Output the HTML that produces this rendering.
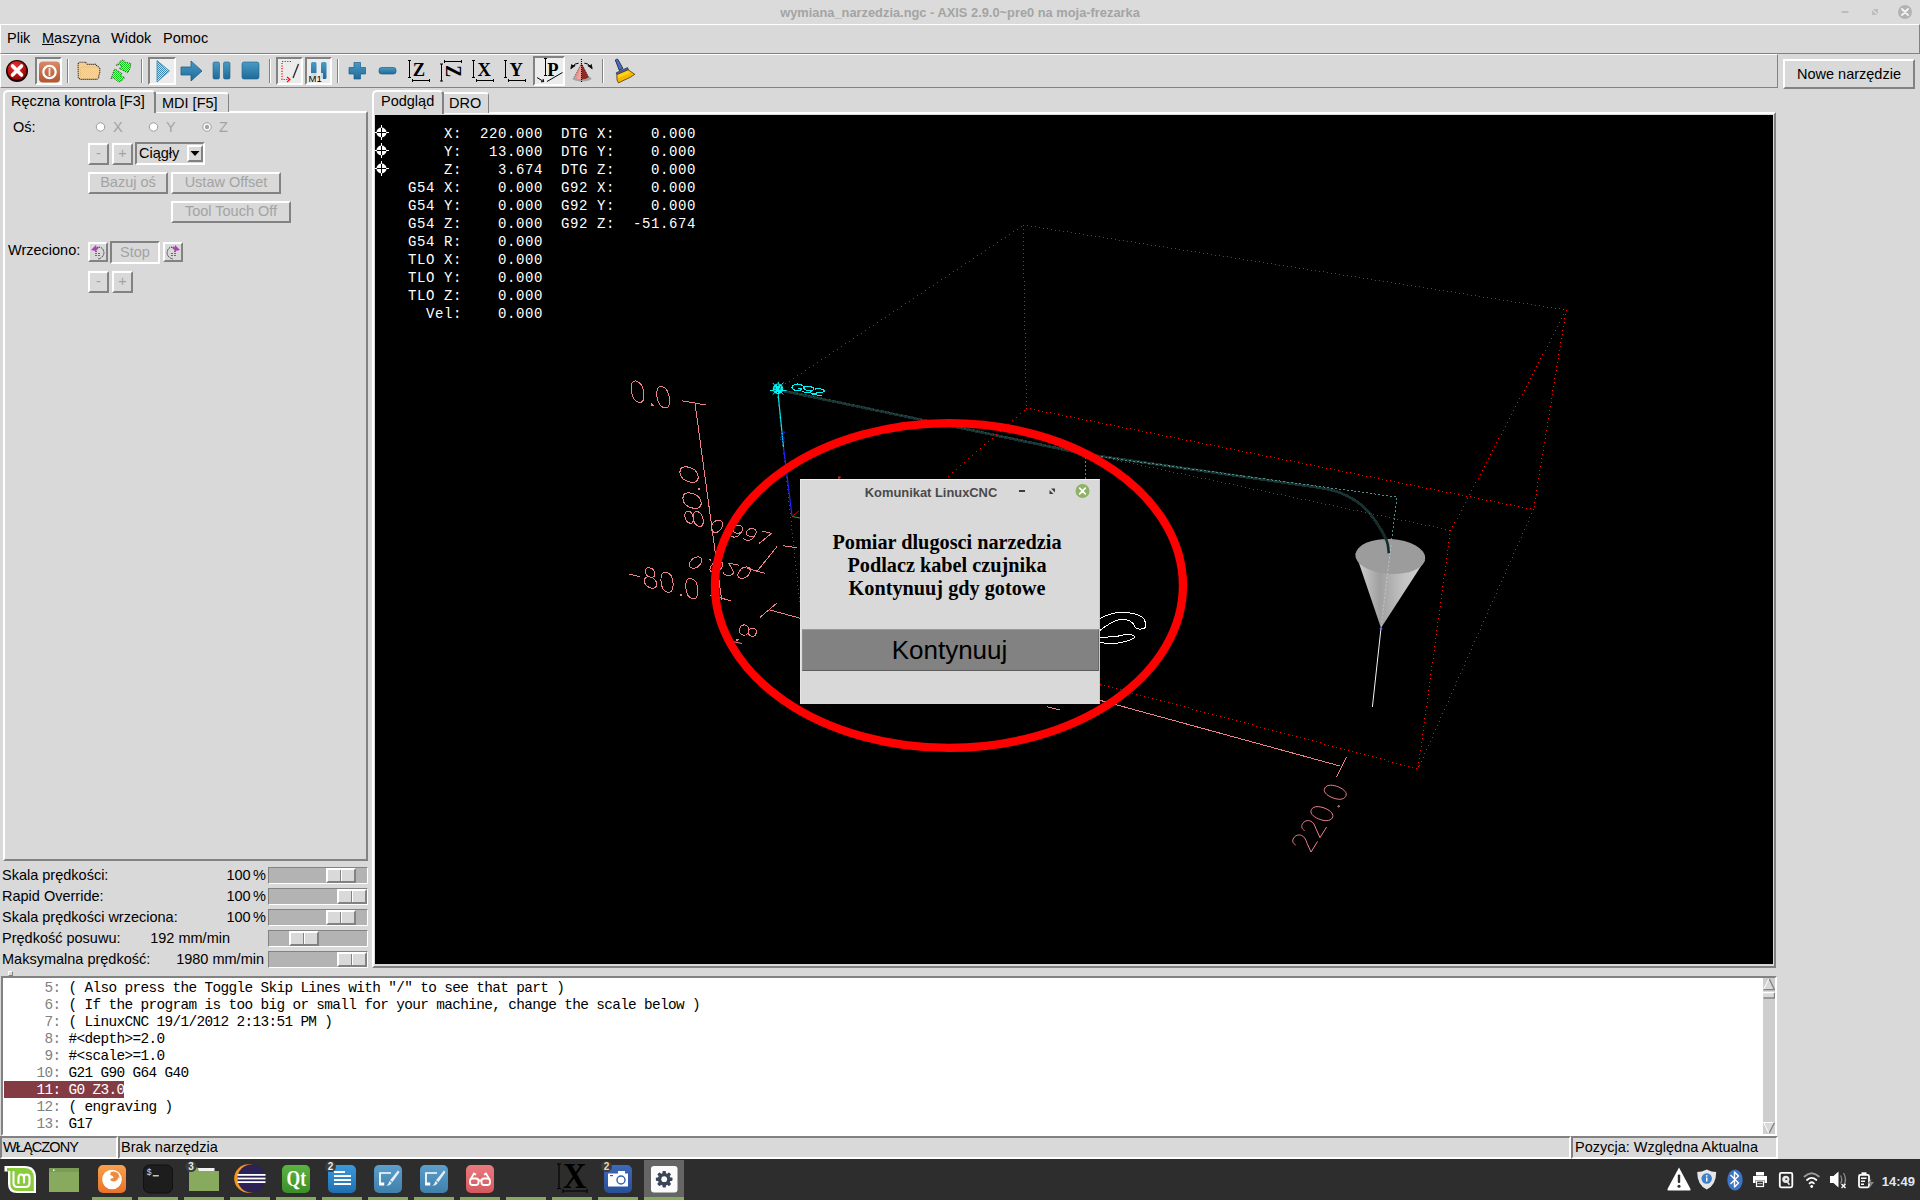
<!DOCTYPE html>
<html lang="pl">
<head>
<meta charset="utf-8">
<title>wymiana_narzedzia.ngc - AXIS 2.9.0~pre0 na moja-frezarka</title>
<style>
*{box-sizing:border-box;margin:0;padding:0}
html,body{width:1920px;height:1200px;overflow:hidden;background:#d9d9d9}
body{position:relative;font-family:"Liberation Sans",sans-serif;font-size:14.5px;color:#000}
.abs{position:absolute}
.t{position:absolute;white-space:pre;line-height:18px;height:18px}
.raised{position:absolute;border:2px solid;border-color:#fff #828282 #828282 #fff;background:#d9d9d9}
.sunken{position:absolute;border:2px solid;border-color:#828282 #fff #fff #828282;background:#d9d9d9}
.btn{position:absolute;border:2px solid;border-color:#fff #828282 #828282 #fff;background:#d9d9d9;color:#a3a3a3;text-align:center;white-space:pre}
.dis{color:#a3a3a3}
.mono{font-family:"Liberation Mono",monospace}
.serif{font-family:"Liberation Serif",serif}
/* title bar */
#titlebar{left:0;top:0;width:1920px;height:24px;background:#dbdbdb}
#titletext{left:0;top:5px;width:1920px;text-align:center;font-size:12.85px;font-weight:bold;color:#a4a4a4;line-height:16px}
/* menubar */
#menubar{left:0;top:24px;width:1920px;height:30px;border:1px solid;border-color:#fff #828282 #828282 #fff;background:#d9d9d9}
/* toolbar */
#toolbar{left:0;top:54px;width:1778px;height:34px;border:1px solid;border-color:#fff #828282 #828282 #fff;background:#d9d9d9}
.tsep{position:absolute;top:59px;width:2px;height:24px;border-left:1px solid #828282;border-right:1px solid #fff}
.tsunk{position:absolute;border:2px solid;border-color:#828282 #fff #fff #828282;background:#ececec}
/* tabs */
.tab{position:absolute;border:2px solid;border-color:#fff #828282 transparent #fff;border-radius:5px 5px 0 0;background:#d9d9d9}
/* g-code */
#gcode{left:1px;top:976px;width:1776px;height:160px;border:2px solid;border-color:#828282 #fff #fff #828282;background:#fff;overflow:hidden}
.gl{position:absolute;height:17px;line-height:17px;font-family:"Liberation Mono",monospace;font-size:14.4px;letter-spacing:-0.642px;white-space:pre;color:#000}
.gl i{font-style:normal;color:#808080}
/* taskbar */
#taskbar{left:0;top:1159px;width:1920px;height:41px;background:#2d2d2d}
.ind{position:absolute;top:38px;height:3px;width:40px;background:#87aa5f}
</style>
</head>
<body>
<div id="titlebar" class="abs"></div>
<div id="titletext" class="abs">wymiana_narzedzia.ngc - AXIS 2.9.0~pre0 na moja-frezarka</div>
<svg class="abs" style="left:1830px;top:0" width="90" height="24" viewBox="0 0 90 24">
<rect x="11.500" y="11" width="7" height="2" fill="#bdbdbd"/>
<path d="M43 9 h5 v5 z M42 15 v-5 l5 5 z" fill="#bdbdbd"/>
<circle cx="75" cy="12" r="7" fill="#b3b3b3"/>
<path d="M72 9 l6 6 M78 9 l-6 6" stroke="#f4f4f4" stroke-width="1.8" stroke-linecap="round"/>
</svg>

<div id="menubar" class="abs"></div>
<div class="t" style="left:7px;top:29px">Plik</div>
<div class="t" style="left:42px;top:29px"><u>M</u>aszyna</div>
<div class="t" style="left:111px;top:29px">Widok</div>
<div class="t" style="left:163px;top:29px">Pomoc</div>
<div class="raised" style="left:1783px;top:59px;width:132px;height:30px"></div>
<div class="t" style="left:1783px;top:65px;width:132px;text-align:center">Nowe narzędzie</div>

<div id="toolbar" class="abs"></div>
<div class="tsunk" style="left:35px;top:57px;width:27px;height:28px"></div>
<div class="tsunk" style="left:148px;top:57px;width:28px;height:28px"></div>
<div class="tsunk" style="left:276px;top:57px;width:27px;height:28px"></div>
<div class="tsunk" style="left:305px;top:57px;width:27px;height:28px"></div>
<div class="tsunk" style="left:533px;top:56px;width:32px;height:30px"></div>
<div class="tsep" style="left:67px"></div><div class="tsep" style="left:141px"></div><div class="tsep" style="left:269px"></div><div class="tsep" style="left:337px"></div><div class="tsep" style="left:602px"></div>
<svg class="abs" style="left:0;top:54px" width="700" height="34" viewBox="0 54 700 34">
<defs>
<linearGradient id="gb" x1="0" y1="0" x2="0" y2="1"><stop offset="0" stop-color="#4a9ac6"/><stop offset="1" stop-color="#1f6a98"/></linearGradient>
<radialGradient id="gr" cx="0.4" cy="0.3" r="0.8"><stop offset="0" stop-color="#f03030"/><stop offset="1" stop-color="#8a0000"/></radialGradient>
<linearGradient id="go" x1="0" y1="0" x2="0" y2="1"><stop offset="0" stop-color="#d98a68"/><stop offset="1" stop-color="#b5532c"/></linearGradient>
<pattern id="dots" width="2" height="2" patternUnits="userSpaceOnUse"><rect width="2" height="2" fill="#d9d9d9"/><rect width="1" height="1" fill="#3c86b3"/><rect x="1" y="1" width="1" height="1" fill="#3c86b3"/></pattern>
<pattern id="dotf" width="2" height="2" patternUnits="userSpaceOnUse"><rect width="2" height="2" fill="#d9d9d9"/><rect width="1" height="1" fill="#f0c888"/><rect x="1" y="1" width="1" height="1" fill="#f0c888"/></pattern>
<pattern id="dotg" width="2" height="2" patternUnits="userSpaceOnUse"><rect width="2" height="2" fill="#d9d9d9"/><rect width="1" height="1" fill="#08cc10"/><rect x="1" y="1" width="1" height="1" fill="#18d820"/></pattern>
</defs>
<!-- estop -->
<circle cx="17" cy="71" r="11" fill="#1a0000"/><circle cx="17" cy="70.5" r="9.6" fill="url(#gr)"/>
<path d="M12.5 66 l9 9 M21.5 66 l-9 9" stroke="#fff" stroke-width="3.6" stroke-linecap="round"/>
<!-- power -->
<rect x="39" y="61.5" width="21" height="21" rx="4" fill="url(#go)"/>
<circle cx="49.5" cy="72" r="6.2" fill="none" stroke="#fff" stroke-width="2.2"/><rect x="48.6" y="68" width="1.8" height="8" fill="#f6e4dc"/>
<!-- folder -->
<path d="M78.100,63.600 L79.400,62.300 H85.600 L87.500,64.400 H95.600 L99.800,68.400 V72.750 L98.750,75.700 V77.750 L96.700,79.400 H80.200 L78.300,77.750 Z" fill="url(#dotf)" stroke="#111" stroke-width="1.100" stroke-dasharray="1 1"/>
<path d="M80.500,77 V68.500 L82,67 H96" fill="none" stroke="#e0b070" stroke-width="0.800" stroke-dasharray="1 1"/>
<!-- reload -->
<path d="M116,65.500 L121.500,60.250 H123.750 L125.400,62.300 L130.800,63.400 L130,68.600 L127.700,72.750 L119.200,68.400 L121.700,66.300 L119.600,64.400 Z" fill="url(#dotg)" stroke="#1c3c1c" stroke-width="0.900" stroke-dasharray="1 1"/>
<path d="M111,78.600 L114.400,69.200 L116.250,69.800 L121.900,73.600 L120.600,75.700 L124.800,77.750 L120.400,81.700 H118.300 L113.300,77.750 Z" fill="url(#dotg)" stroke="#1c3c1c" stroke-width="0.900" stroke-dasharray="1 1"/>
<!-- play -->
<path d="M157 60.5 L169.5 71 L157 82 z" fill="url(#dots)" stroke="#3c86b3" stroke-width="0.8"/>
<!-- step -->
<path d="M181 67 h10 v-6 l11 10 l-11 10 v-6 h-10 z" fill="url(#gb)" stroke="#1b5f8a" stroke-width="0.8"/>
<!-- pause -->
<rect x="213" y="62" width="6.5" height="17" rx="1.5" fill="url(#gb)" stroke="#1b5f8a" stroke-width="0.6"/><rect x="223.5" y="62" width="6.5" height="17" rx="1.5" fill="url(#gb)" stroke="#1b5f8a" stroke-width="0.6"/>
<!-- stop -->
<rect x="242" y="62" width="17" height="17" rx="2" fill="url(#gb)" stroke="#1b5f8a" stroke-width="0.6"/>
<!-- skip -->
<path d="M291 61.5 h-9 v18 h7" fill="none" stroke="#f00" stroke-width="1.2" stroke-dasharray="1.2 1.4"/><path d="M287 77 l3 2.5 l-3 2.5" fill="none" stroke="#f00" stroke-width="1.1"/>
<path d="M298.5 64 l-5.5 14" stroke="#333" stroke-width="1.4"/>
<!-- M1 -->
<rect x="311" y="62" width="5.5" height="17" rx="1.5" fill="url(#gb)"/><rect x="321" y="62" width="5.5" height="17" rx="1.5" fill="url(#gb)"/>
<rect x="308" y="73" width="15" height="9" fill="#ececec" opacity="0.85"/>
<text x="308.5" y="82" font-family="Liberation Sans" font-size="9.5" fill="#000">M1</text>
<!-- plus / minus -->
<path d="M354 62.5 h6.5 v5 h5 v6.5 h-5 v5 h-6.5 v-5 h-5 v-6.5 h5 z" fill="url(#gb)" stroke="#1b5f8a" stroke-width="0.7" stroke-linejoin="round"/>
<rect x="379" y="67.5" width="17" height="6.5" rx="2.5" fill="url(#gb)" stroke="#1b5f8a" stroke-width="0.7"/>
<!-- view Z -->
<g fill="none" stroke="#000" stroke-width="1">
<path d="M409.500,60.500 v17 M408,60.500 h3 M408,77.500 h3 M412,80.500 h18 M412.500,79 v3 M429.500,79 v3"/>
<path d="M441.500,64 v17 M440,64 h3 M440,81 h3 M444,61.500 h18 M444.500,60 v3 M461.500,60 v3"/>
<path d="M473.500,60.500 v17 M472,60.500 h3 M472,77.500 h3 M476,80.500 h18 M476.500,79 v3 M493.500,79 v3"/>
<path d="M505.500,60.500 v17 M504,60.500 h3 M504,77.500 h3 M508,80.500 h18 M508.500,79 v3 M525.500,79 v3"/>
<path d="M545.500,58.500 v17 M544,58.500 h3 M544,75.500 h3 M547,81.500 l15.500,-9 M537,77.500 l6.500,4 M541,81.800 l2.700,-0.200 l-0.600,-2.600"/>
</g>
<g font-family="Liberation Serif" font-weight="bold" font-size="18.500" fill="#000">
<text x="412.800" y="75.700">Z</text>
<text transform="translate(445.500,65.300) rotate(90) scale(0.960,1.200)">Z</text>
<text x="477.500" y="75.700">X</text>
<text x="509.500" y="75.700">Y</text>
<text x="547.300" y="75.700" font-size="18.500">P</text>
</g>
<!-- cone rotate -->
<ellipse cx="582" cy="78.500" rx="9.500" ry="3" fill="#444" opacity="0.35"/>
<path d="M581.500,63.300 L574.300,77.300 Q577,79.600 581.500,79.600 z" fill="#ee948c"/><path d="M581.500,63.300 L577.500,78.800 Q579,79.600 581.500,79.600 z" fill="#f4b0a8" opacity="0.6"/>
<path d="M581.500,63.300 L588.700,77.300 Q586,79.600 581.500,79.600 z" fill="#8e2c24"/>
<path d="M581.500,63.300 L574.300,77.300 M581.500,63.300 L588.700,77.300" stroke="#2a1010" stroke-width="0.700" stroke-dasharray="1 1" fill="none"/>
<path d="M581.500,59 v24" stroke="#000" stroke-width="1.100" stroke-dasharray="1 1"/>
<path d="M572.500,66.500 Q575,63.200 578.600,63.200 M590.500,66.500 Q588,63.200 584.400,63.200" fill="none" stroke="#000" stroke-width="1"/>
<path d="M570.800,68.800 l0.900,-4.300 l1.300,1.500 l2.200,-0.400 z M592.200,68.800 l-0.900,-4.300 l-1.300,1.500 l-2.200,-0.400 z" fill="#000" stroke="#000" stroke-width="0.800" stroke-linejoin="round"/>
<!-- broom -->
<path d="M615.300,60 q1.200,-1.300 2.600,-0.600 l5,9 l-3.600,2 z" fill="#4a6ec2" stroke="#101830" stroke-width="0.800"/>
<path d="M616.200,72.800 l11.300,-5.200 l1,2.200 l-11.500,5 z" fill="#4468b8" stroke="#101830" stroke-width="0.600"/>
<path d="M616.800,74.600 l11.300,-4.900 l6.700,4.600 l-4.600,3 l-11.800,5.600 l-1.400,-3 z" fill="#f4b800" stroke="#3a2800" stroke-width="0.700" stroke-linejoin="round"/>
<path d="M617.500,75.200 l10.300,-4.500 l3,2.200 l-12.500,5 z" fill="#ffd820" opacity="0.8"/>
</svg>

<!-- left notebook -->
<div class="raised" style="left:3px;top:111px;width:365px;height:750px"></div>
<div class="tab" style="left:156px;top:92px;width:73px;height:20px;border-width:2px 1px 0 0;border-radius:0 4px 0 0"></div>
<div class="tab" style="left:3px;top:90px;width:153px;height:23px;border-bottom:0"></div>
<div class="abs" style="left:154px;top:92px;width:2px;height:20px;background:#828282"></div>
<div class="t" style="left:11px;top:92px">Ręczna kontrola [F3]</div>
<div class="t" style="left:162px;top:94px">MDI [F5]</div>
<!-- right notebook -->
<div class="raised" style="left:372px;top:112px;width:1404px;height:856px"></div>
<div class="tab" style="left:444px;top:92px;width:45px;height:21px;border-width:2px 1px 0 0;border-radius:0 4px 0 0"></div>
<div class="tab" style="left:372px;top:90px;width:72px;height:24px;border-bottom:0"></div>
<div class="abs" style="left:442px;top:92px;width:2px;height:21px;background:#828282"></div>
<div class="t" style="left:381px;top:92px">Podgląd</div>
<div class="t" style="left:449px;top:94px">DRO</div>
<!-- jog controls -->
<div class="t" style="left:13px;top:118px">Oś:</div>
<svg class="abs" style="left:90px;top:118px" width="150" height="18" viewBox="90 118 150 18">
<g fill="#fff" stroke="#9c9c9c" stroke-width="1"><circle cx="100.500" cy="127" r="4.200"/><circle cx="153.500" cy="127" r="4.200"/><circle cx="207" cy="127" r="4.200"/></g>
<circle cx="207" cy="127" r="2.200" fill="#a3a3a3"/>
</svg>
<div class="t dis" style="left:113px;top:118px">X</div>
<div class="t dis" style="left:166px;top:118px">Y</div>
<div class="t dis" style="left:219px;top:118px">Z</div>
<div class="btn" style="left:88px;top:143px;width:21px;height:22px;line-height:17px">-</div>
<div class="btn" style="left:112px;top:143px;width:21px;height:22px;line-height:17px">+</div>
<div class="sunken" style="left:135px;top:142px;width:70px;height:23px"></div>
<div class="t" style="left:139px;top:144px">Ciągły</div>
<div class="raised" style="left:187px;top:145px;width:16px;height:17px"></div>
<svg class="abs" style="left:190px;top:150px" width="10" height="7"><path d="M0.500 1 h9 l-4.500 5 z" fill="#000"/></svg>
<div class="btn" style="left:88px;top:172px;width:80px;height:22px;line-height:17px">Bazuj oś</div>
<div class="btn" style="left:171px;top:172px;width:110px;height:22px;line-height:17px">Ustaw Offset</div>
<div class="btn" style="left:171px;top:201px;width:120px;height:22px;line-height:17px">Tool Touch Off</div>
<div class="t" style="left:8px;top:241px">Wrzeciono:</div>
<div class="btn" style="left:88px;top:242px;width:20px;height:20px"></div>
<div class="sunken" style="left:110px;top:241px;width:50px;height:23px"></div>
<div class="t dis" style="left:110px;top:243px;width:50px;text-align:center">Stop</div>
<div class="btn" style="left:163px;top:242px;width:20px;height:20px"></div>
<svg class="abs" style="left:88px;top:242px" width="96" height="20" viewBox="88 242 96 20">
<g fill="none" stroke="#000" stroke-width="1" stroke-dasharray="1 1"><path d="M95 248 q8 -3 9 5 q-1 5 -6 6"/><path d="M176 248 q-8 -3 -9 5 q1 5 6 6"/></g>
<path d="M91 250 l5 -5 l0.500 2.500 l3 -0.500 l-3.500 4 z" fill="#b040b0"/><path d="M180 250 l-5 -5 l-0.500 2.500 l-3 -0.500 l3.500 4 z" fill="#b040b0"/>
<path d="M96 251 v5 M99 253 v4 M175 251 v5 M172 253 v4" stroke="#000" stroke-width="1" stroke-dasharray="1 1"/>
</svg>
<div class="btn" style="left:88px;top:271px;width:21px;height:22px;line-height:17px">-</div>
<div class="btn" style="left:112px;top:271px;width:21px;height:22px;line-height:17px">+</div>

<!--PREVIEW-START-->
<svg class="abs" style="left:375px;top:115px" width="1398" height="849" viewBox="375 115 1398 849">
<rect x="375" y="115" width="1399" height="850" fill="#000"/>
<g font-family="Liberation Mono" font-size="14" letter-spacing="0.6" fill="#fff" style="white-space:pre"><text x="408" y="138" xml:space="preserve">    X:  220.000  DTG X:    0.000</text><text x="408" y="156" xml:space="preserve">    Y:   13.000  DTG Y:    0.000</text><text x="408" y="174" xml:space="preserve">    Z:    3.674  DTG Z:    0.000</text><text x="408" y="192" xml:space="preserve">G54 X:    0.000  G92 X:    0.000</text><text x="408" y="210" xml:space="preserve">G54 Y:    0.000  G92 Y:    0.000</text><text x="408" y="228" xml:space="preserve">G54 Z:    0.000  G92 Z:  -51.674</text><text x="408" y="246" xml:space="preserve">G54 R:    0.000</text><text x="408" y="264" xml:space="preserve">TLO X:    0.000</text><text x="408" y="282" xml:space="preserve">TLO Y:    0.000</text><text x="408" y="300" xml:space="preserve">TLO Z:    0.000</text><text x="408" y="318" xml:space="preserve">  Vel:    0.000</text></g>
<g transform="translate(381.5,132.5)"><circle r="5" fill="#fff"/><path d="M-5,0 h10 M0,-5 v10" stroke="#000" stroke-width="1"/><path d="M-7.500,0 h3 M4.500,0 h3 M0,-7.500 v3 M0,4.500 v3" stroke="#fff" stroke-width="1"/></g><g transform="translate(381.5,150.5)"><circle r="5" fill="#fff"/><path d="M-5,0 h10 M0,-5 v10" stroke="#000" stroke-width="1"/><path d="M-7.500,0 h3 M4.500,0 h3 M0,-7.500 v3 M0,4.500 v3" stroke="#fff" stroke-width="1"/></g><g transform="translate(381.5,168.5)"><circle r="5" fill="#fff"/><path d="M-5,0 h10 M0,-5 v10" stroke="#000" stroke-width="1"/><path d="M-7.500,0 h3 M4.500,0 h3 M0,-7.500 v3 M0,4.500 v3" stroke="#fff" stroke-width="1"/></g>
<path shape-rendering="crispEdges" d="M681.7,400.7 L706,405 M695,403.3 L721.7,600 M710,595 L730.7,600.7 M783,545.7 L797,547.7 M746.7,568.3 L765,573.3 M777,546.5 L756.5,572 M760,617.3 L776.7,603.3 M770,610 L1340,766 M1346.7,756.7 L1336.7,776.7 M1047,706.7 L1060,710" fill="none" stroke="#f08088" stroke-width="1"/>
<g fill="none" shape-rendering="crispEdges" stroke="#f08088" stroke-width="1.00"><path vector-effect="non-scaling-stroke" d="M0.3,-1 C0.1,-1 0,-0.78 0,-0.5 C0,-0.22 0.1,0 0.3,0 C0.5,0 0.6,-0.22 0.6,-0.5 C0.6,-0.78 0.5,-1 0.3,-1 Z" transform="matrix(21.027,4.515,2.580,21.285,632.50,401.00)"/><path vector-effect="non-scaling-stroke" d="M0.1,-0.06 L0.1,0 L0.16,0 L0.16,-0.06 Z" transform="matrix(21.027,4.515,2.580,21.285,649.74,404.70)"/><path vector-effect="non-scaling-stroke" d="M0.3,-1 C0.1,-1 0,-0.78 0,-0.5 C0,-0.22 0.1,0 0.3,0 C0.5,0 0.6,-0.22 0.6,-0.5 C0.6,-0.78 0.5,-1 0.3,-1 Z" transform="matrix(21.027,4.515,2.580,21.285,658.15,406.51)"/></g>
<g fill="none" shape-rendering="crispEdges" stroke="#f08088" stroke-width="1.00"><path vector-effect="non-scaling-stroke" d="M0.05,-0.42 L0.6,-0.42" transform="matrix(20.370,5.250,1.000,20.000,628.00,582.00)"/><path vector-effect="non-scaling-stroke" d="M0.3,-0.54 C0.14,-0.54 0.06,-0.64 0.06,-0.77 C0.06,-0.9 0.16,-1 0.3,-1 C0.44,-1 0.54,-0.9 0.54,-0.77 C0.54,-0.64 0.46,-0.54 0.3,-0.54 C0.12,-0.54 0,-0.42 0,-0.27 C0,-0.1 0.12,0 0.3,0 C0.48,0 0.6,-0.1 0.6,-0.27 C0.6,-0.42 0.48,-0.54 0.3,-0.54 Z" transform="matrix(20.370,5.250,1.000,20.000,644.70,586.30)"/><path vector-effect="non-scaling-stroke" d="M0.3,-1 C0.1,-1 0,-0.78 0,-0.5 C0,-0.22 0.1,0 0.3,0 C0.5,0 0.6,-0.22 0.6,-0.5 C0.6,-0.78 0.5,-1 0.3,-1 Z" transform="matrix(20.370,5.250,1.000,20.000,661.41,590.61)"/><path vector-effect="non-scaling-stroke" d="M0.1,-0.06 L0.1,0 L0.16,0 L0.16,-0.06 Z" transform="matrix(20.370,5.250,1.000,20.000,678.11,594.91)"/><path vector-effect="non-scaling-stroke" d="M0.3,-1 C0.1,-1 0,-0.78 0,-0.5 C0,-0.22 0.1,0 0.3,0 C0.5,0 0.6,-0.22 0.6,-0.5 C0.6,-0.78 0.5,-1 0.3,-1 Z" transform="matrix(20.370,5.250,1.000,20.000,686.26,597.01)"/></g>
<g fill="none" shape-rendering="crispEdges" stroke="#f08088" stroke-width="1.00"><path vector-effect="non-scaling-stroke" d="M0.3,-0.54 C0.14,-0.54 0.06,-0.64 0.06,-0.77 C0.06,-0.9 0.16,-1 0.3,-1 C0.44,-1 0.54,-0.9 0.54,-0.77 C0.54,-0.64 0.46,-0.54 0.3,-0.54 C0.12,-0.54 0,-0.42 0,-0.27 C0,-0.1 0.12,0 0.3,0 C0.48,0 0.6,-0.1 0.6,-0.27 C0.6,-0.42 0.48,-0.54 0.3,-0.54 Z" transform="matrix(-2.825,-24.850,18.232,3.740,704.00,527.50)"/><path vector-effect="non-scaling-stroke" d="M0.3,-1 C0.1,-1 0,-0.78 0,-0.5 C0,-0.22 0.1,0 0.3,0 C0.5,0 0.6,-0.22 0.6,-0.5 C0.6,-0.78 0.5,-1 0.3,-1 Z" transform="matrix(-2.825,-24.850,18.232,3.740,702.01,509.98)"/><path vector-effect="non-scaling-stroke" d="M0.1,-0.06 L0.1,0 L0.16,0 L0.16,-0.06 Z" transform="matrix(-2.825,-24.850,18.232,3.740,700.02,492.45)"/><path vector-effect="non-scaling-stroke" d="M0.3,-1 C0.1,-1 0,-0.78 0,-0.5 C0,-0.22 0.1,0 0.3,0 C0.5,0 0.6,-0.22 0.6,-0.5 C0.6,-0.78 0.5,-1 0.3,-1 Z" transform="matrix(-2.825,-24.850,18.232,3.740,699.04,483.90)"/></g>
<g fill="none" shape-rendering="crispEdges" stroke="#f08088" stroke-width="1.00"><path vector-effect="non-scaling-stroke" d="M0.03,-0.76 C0.05,-0.92 0.15,-1 0.3,-1 C0.46,-1 0.57,-0.9 0.57,-0.76 C0.57,-0.62 0.48,-0.52 0.32,-0.36 L0,0 L0.6,0" transform="matrix(10.939,-17.544,20.640,8.640,1311.00,852.00)"/><path vector-effect="non-scaling-stroke" d="M0.03,-0.76 C0.05,-0.92 0.15,-1 0.3,-1 C0.46,-1 0.57,-0.9 0.57,-0.76 C0.57,-0.62 0.48,-0.52 0.32,-0.36 L0,0 L0.6,0" transform="matrix(10.939,-17.544,20.640,8.640,1319.97,837.61)"/><path vector-effect="non-scaling-stroke" d="M0.3,-1 C0.1,-1 0,-0.78 0,-0.5 C0,-0.22 0.1,0 0.3,0 C0.5,0 0.6,-0.22 0.6,-0.5 C0.6,-0.78 0.5,-1 0.3,-1 Z" transform="matrix(10.939,-17.544,20.640,8.640,1328.94,823.23)"/><path vector-effect="non-scaling-stroke" d="M0.1,-0.06 L0.1,0 L0.16,0 L0.16,-0.06 Z" transform="matrix(10.939,-17.544,20.640,8.640,1337.91,808.84)"/><path vector-effect="non-scaling-stroke" d="M0.3,-1 C0.1,-1 0,-0.78 0,-0.5 C0,-0.22 0.1,0 0.3,0 C0.5,0 0.6,-0.22 0.6,-0.5 C0.6,-0.78 0.5,-1 0.3,-1 Z" transform="matrix(10.939,-17.544,20.640,8.640,1342.29,801.82)"/></g>
<g fill="none" shape-rendering="crispEdges" stroke="#f08088" stroke-width="1.00"><path vector-effect="non-scaling-stroke" d="M0.3,-1 C0.1,-1 0,-0.78 0,-0.5 C0,-0.22 0.1,0 0.3,0 C0.5,0 0.6,-0.22 0.6,-0.5 C0.6,-0.78 0.5,-1 0.3,-1 Z" transform="matrix(16.393,4.056,-5.850,11.700,709.00,531.00)"/><path vector-effect="non-scaling-stroke" d="M0.1,-0.06 L0.1,0 L0.16,0 L0.16,-0.06 Z" transform="matrix(16.393,4.056,-5.850,11.700,722.44,534.33)"/><path vector-effect="non-scaling-stroke" d="M0.58,-0.66 C0.58,-0.46 0.46,-0.36 0.3,-0.36 C0.14,-0.36 0.02,-0.48 0.02,-0.67 C0.02,-0.87 0.14,-1 0.3,-1 C0.47,-1 0.58,-0.87 0.58,-0.66 C0.58,-0.3 0.5,0 0.22,0 C0.12,0 0.06,-0.05 0.04,-0.12" transform="matrix(16.393,4.056,-5.850,11.700,729.00,535.95)"/><path vector-effect="non-scaling-stroke" d="M0.58,-0.66 C0.58,-0.46 0.46,-0.36 0.3,-0.36 C0.14,-0.36 0.02,-0.48 0.02,-0.67 C0.02,-0.87 0.14,-1 0.3,-1 C0.47,-1 0.58,-0.87 0.58,-0.66 C0.58,-0.3 0.5,0 0.22,0 C0.12,0 0.06,-0.05 0.04,-0.12" transform="matrix(16.393,4.056,-5.850,11.700,742.44,539.27)"/><path vector-effect="non-scaling-stroke" d="M0,-1 L0.6,-1 L0.2,0" transform="matrix(16.393,4.056,-5.850,11.700,755.88,542.60)"/></g>
<g fill="none" shape-rendering="crispEdges" stroke="#f08088" stroke-width="1.00"><path vector-effect="non-scaling-stroke" d="M0.3,-1 C0.1,-1 0,-0.78 0,-0.5 C0,-0.22 0.1,0 0.3,0 C0.5,0 0.6,-0.22 0.6,-0.5 C0.6,-0.78 0.5,-1 0.3,-1 Z" transform="matrix(17.024,3.510,7.150,-11.050,694.00,556.00)"/><path vector-effect="non-scaling-stroke" d="M0.1,-0.06 L0.1,0 L0.16,0 L0.16,-0.06 Z" transform="matrix(17.024,3.510,7.150,-11.050,707.96,558.88)"/><path vector-effect="non-scaling-stroke" d="M0.3,-1 C0.1,-1 0,-0.78 0,-0.5 C0,-0.22 0.1,0 0.3,0 C0.5,0 0.6,-0.22 0.6,-0.5 C0.6,-0.78 0.5,-1 0.3,-1 Z" transform="matrix(17.024,3.510,7.150,-11.050,714.77,560.28)"/><path vector-effect="non-scaling-stroke" d="M0.03,-0.76 C0.05,-0.92 0.15,-1 0.3,-1 C0.46,-1 0.57,-0.9 0.57,-0.76 C0.57,-0.62 0.48,-0.52 0.32,-0.36 L0,0 L0.6,0" transform="matrix(17.024,3.510,7.150,-11.050,728.73,563.16)"/><path vector-effect="non-scaling-stroke" d="M0.3,-1 C0.1,-1 0,-0.78 0,-0.5 C0,-0.22 0.1,0 0.3,0 C0.5,0 0.6,-0.22 0.6,-0.5 C0.6,-0.78 0.5,-1 0.3,-1 Z" transform="matrix(17.024,3.510,7.150,-11.050,742.69,566.04)"/></g>
<g fill="none" shape-rendering="crispEdges" stroke="#f08088" stroke-width="1.00"><path vector-effect="non-scaling-stroke" d="M0.3,-0.54 C0.14,-0.54 0.06,-0.64 0.06,-0.77 C0.06,-0.9 0.16,-1 0.3,-1 C0.44,-1 0.54,-0.9 0.54,-0.77 C0.54,-0.64 0.46,-0.54 0.3,-0.54 C0.12,-0.54 0,-0.42 0,-0.27 C0,-0.1 0.12,0 0.3,0 C0.48,0 0.6,-0.1 0.6,-0.27 C0.6,-0.42 0.48,-0.54 0.3,-0.54 Z" transform="matrix(-4.250,16.490,-16.490,-4.250,741.00,624.00)"/><path vector-effect="non-scaling-stroke" d="M0.1,-0.06 L0.1,0 L0.16,0 L0.16,-0.06 Z" transform="matrix(-4.250,16.490,-16.490,-4.250,737.51,637.52)"/></g>
<path d="M725,640 L742,643.5" stroke="#f08088" stroke-width="1"/>
<path d="M779,390 L1085,454 L1320,487.7  C1323.5,488.6 1333.8,489.9 1340.8,492.9 C1347.8,495.8 1355.8,500.5 1361.7,505.4 C1367.6,510.2 1372.1,516.1 1376.2,522.0 C1380.4,527.9 1384.6,535.6 1386.7,540.8 C1388.8,546.0 1388.4,551.2 1388.8,553.3" fill="none" stroke="#163030" stroke-width="2.8" shape-rendering="crispEdges"/>
<path d="M779,390 L1085,454 L1320,487.7  C1323.5,488.6 1333.8,489.9 1340.8,492.9 C1347.8,495.8 1355.8,500.5 1361.7,505.4 C1367.6,510.2 1372.1,516.1 1376.2,522.0 C1380.4,527.9 1384.6,535.6 1386.7,540.8 C1388.8,546.0 1388.4,551.2 1388.8,553.3" fill="none" stroke="#284848" stroke-width="0.8" stroke-dasharray="1 2"/>
<path d="M1085.500,479 V455 M1085,454.500 L1397,497 L1391,545" fill="none" stroke="#4f8c8c" stroke-width="1" stroke-dasharray="2 2" shape-rendering="crispEdges"/>
<path shape-rendering="crispEdges" fill="none" stroke="#ff0000" stroke-width="1" d="M777 389.5h1M781 386.5h1M785 383.5h1M789 381.5h1M793 378.5h1M797 375.5h1M801 373.5h1M805 370.5h1M809 367.5h1M813 365.5h1M817 362.5h1M821 359.5h1M825 357.5h1M829 354.5h1M833 351.5h1M837 349.5h1M841 346.5h1M845 343.5h1M849 341.5h1M853 338.5h1M857 335.5h1M861 333.5h1M865 330.5h1M869 327.5h1M873 325.5h1M877 322.5h1M881 319.5h1M885 317.5h1M889 314.5h1M893 311.5h1M897 309.5h1M901 306.5h1M905 303.5h1M909 301.5h1M913 298.5h1M917 295.5h1M921 293.5h1M925 290.5h1M929 287.5h1M933 285.5h1M937 282.5h1M941 279.5h1M945 277.5h1M949 274.5h1M953 271.5h1M957 269.5h1M961 266.5h1M965 263.5h1M969 261.5h1M973 258.5h1M977 255.5h1M981 253.5h1M985 250.5h1M989 247.5h1M993 245.5h1M997 242.5h1M1001 239.5h1M1005 237.5h1M1009 234.5h1M1013 231.5h1M1017 229.5h1M1021 226.5h1M1023 225.5h1M1027 225.5h1M1031 226.5h1M1035 226.5h1M1039 227.5h1M1043 228.5h1M1047 228.5h1M1051 229.5h1M1055 230.5h1M1059 230.5h1M1063 231.5h1M1067 231.5h1M1071 232.5h1M1075 233.5h1M1079 233.5h1M1083 234.5h1M1087 235.5h1M1091 235.5h1M1095 236.5h1M1099 236.5h1M1103 237.5h1M1107 238.5h1M1111 238.5h1M1115 239.5h1M1119 240.5h1M1123 240.5h1M1127 241.5h1M1131 241.5h1M1135 242.5h1M1139 243.5h1M1143 243.5h1M1147 244.5h1M1151 245.5h1M1155 245.5h1M1159 246.5h1M1163 246.5h1M1167 247.5h1M1171 248.5h1M1175 248.5h1M1179 249.5h1M1183 250.5h1M1187 250.5h1M1191 251.5h1M1195 251.5h1M1199 252.5h1M1203 253.5h1M1207 253.5h1M1211 254.5h1M1215 255.5h1M1219 255.5h1M1223 256.5h1M1227 256.5h1M1231 257.5h1M1235 258.5h1M1239 258.5h1M1243 259.5h1M1247 260.5h1M1251 260.5h1M1255 261.5h1M1259 261.5h1M1263 262.5h1M1267 263.5h1M1271 263.5h1M1275 264.5h1M1279 265.5h1M1283 265.5h1M1287 266.5h1M1291 266.5h1M1295 267.5h1M1299 268.5h1M1303 268.5h1M1307 269.5h1M1311 270.5h1M1315 270.5h1M1319 271.5h1M1323 271.5h1M1327 272.5h1M1331 273.5h1M1335 273.5h1M1339 274.5h1M1343 275.5h1M1347 275.5h1M1351 276.5h1M1355 276.5h1M1359 277.5h1M1363 278.5h1M1367 278.5h1M1371 279.5h1M1375 280.5h1M1379 280.5h1M1383 281.5h1M1387 281.5h1M1391 282.5h1M1395 283.5h1M1399 283.5h1M1403 284.5h1M1407 285.5h1M1411 285.5h1M1415 286.5h1M1419 286.5h1M1423 287.5h1M1427 288.5h1M1431 288.5h1M1435 289.5h1M1439 290.5h1M1443 290.5h1M1447 291.5h1M1451 291.5h1M1455 292.5h1M1459 293.5h1M1463 293.5h1M1467 294.5h1M1471 295.5h1M1475 295.5h1M1479 296.5h1M1483 297.5h1M1487 297.5h1M1491 298.5h1M1495 298.5h1M1499 299.5h1M1503 300.5h1M1507 300.5h1M1511 301.5h1M1515 302.5h1M1519 302.5h1M1523 303.5h1M1527 303.5h1M1531 304.5h1M1535 305.5h1M1539 305.5h1M1543 306.5h1M1547 307.5h1M1551 307.5h1M1555 308.5h1M1559 308.5h1M1563 309.5h1M1566 310.5h1M1563 314.5h1M1561 318.5h1M1559 322.5h1M1557 326.5h1M1555 330.5h1M1553 334.5h1M1551 338.5h1M1549 342.5h1M1547 346.5h1M1545 350.5h1M1542 354.5h1M1540 358.5h1M1538 362.5h1M1536 366.5h1M1534 370.5h1M1532 374.5h1M1530 378.5h1M1528 382.5h1M1526 386.5h1M1524 390.5h1M1522 394.5h1M1519 398.5h1M1517 402.5h1M1515 406.5h1M1513 410.5h1M1511 414.5h1M1509 418.5h1M1507 422.5h1M1505 426.5h1M1503 430.5h1M1501 434.5h1M1498 438.5h1M1496 442.5h1M1494 446.5h1M1492 450.5h1M1490 454.5h1M1488 458.5h1M1486 462.5h1M1484 466.5h1M1482 470.5h1M1480 474.5h1M1478 478.5h1M1475 482.5h1M1473 486.5h1M1471 490.5h1M1469 494.5h1M1467 498.5h1M1465 502.5h1M1463 506.5h1M1461 510.5h1M1459 514.5h1M1457 518.5h1M1454 522.5h1M1452 526.5h1M1450 530.5h1M777 389.5h1M781 389.5h1M785 390.5h1M789 391.5h1M793 392.5h1M797 393.5h1M801 394.5h1M805 394.5h1M809 395.5h1M813 396.5h1M817 397.5h1M821 398.5h1M825 399.5h1M829 399.5h1M833 400.5h1M837 401.5h1M841 402.5h1M845 403.5h1M849 404.5h1M853 404.5h1M857 405.5h1M861 406.5h1M865 407.5h1M869 408.5h1M873 409.5h1M877 410.5h1M881 410.5h1M885 411.5h1M889 412.5h1M893 413.5h1M897 414.5h1M901 415.5h1M905 415.5h1M909 416.5h1M913 417.5h1M917 418.5h1M921 419.5h1M925 420.5h1M929 420.5h1M933 421.5h1M937 422.5h1M941 423.5h1M945 424.5h1M949 425.5h1M953 425.5h1M957 426.5h1M961 427.5h1M965 428.5h1M969 429.5h1M973 430.5h1M977 431.5h1M981 431.5h1M985 432.5h1M989 433.5h1M993 434.5h1M997 435.5h1M1001 436.5h1M1005 436.5h1M1009 437.5h1M1013 438.5h1M1017 439.5h1M1021 440.5h1M1025 441.5h1M1029 441.5h1M1033 442.5h1M1037 443.5h1M1041 444.5h1M1045 445.5h1M1049 446.5h1M1053 446.5h1M1057 447.5h1M1061 448.5h1M1065 449.5h1M1069 450.5h1M1073 451.5h1M1077 452.5h1M1081 452.5h1M1085 453.5h1M1089 454.5h1M1093 455.5h1M1097 456.5h1M1101 457.5h1M1105 457.5h1M1109 458.5h1M1113 459.5h1M1117 460.5h1M1121 461.5h1M1125 462.5h1M1129 462.5h1M1133 463.5h1M1137 464.5h1M1141 465.5h1M1145 466.5h1M1149 467.5h1M1153 467.5h1M1157 468.5h1M1161 469.5h1M1165 470.5h1M1169 471.5h1M1173 472.5h1M1177 473.5h1M1181 473.5h1M1185 474.5h1M1189 475.5h1M1193 476.5h1M1197 477.5h1M1201 478.5h1M1205 478.5h1M1209 479.5h1M1213 480.5h1M1217 481.5h1M1221 482.5h1M1225 483.5h1M1229 483.5h1M1233 484.5h1M1237 485.5h1M1241 486.5h1M1245 487.5h1M1249 488.5h1M1253 489.5h1M1257 489.5h1M1261 490.5h1M1265 491.5h1M1269 492.5h1M1273 493.5h1M1277 494.5h1M1281 494.5h1M1285 495.5h1M1289 496.5h1M1293 497.5h1M1297 498.5h1M1301 499.5h1M1305 499.5h1M1309 500.5h1M1313 501.5h1M1317 502.5h1M1321 503.5h1M1325 504.5h1M1329 504.5h1M1333 505.5h1M1337 506.5h1M1341 507.5h1M1345 508.5h1M1349 509.5h1M1353 510.5h1M1357 510.5h1M1361 511.5h1M1365 512.5h1M1369 513.5h1M1373 514.5h1M1377 515.5h1M1381 515.5h1M1385 516.5h1M1389 517.5h1M1393 518.5h1M1397 519.5h1M1401 520.5h1M1405 520.5h1M1409 521.5h1M1413 522.5h1M1417 523.5h1M1421 524.5h1M1425 525.5h1M1429 525.5h1M1433 526.5h1M1437 527.5h1M1441 528.5h1M1445 529.5h1M1449 530.5h1M800 605.5h1M804 601.5h1M808 598.5h1M812 594.5h1M816 591.5h1M820 587.5h1M824 584.5h1M828 580.5h1M832 577.5h1M836 573.5h1M840 570.5h1M844 566.5h1M848 563.5h1M852 559.5h1M856 556.5h1M860 552.5h1M864 549.5h1M868 545.5h1M872 542.5h1M876 538.5h1M880 535.5h1M884 531.5h1M888 528.5h1M892 524.5h1M896 521.5h1M900 518.5h1M904 514.5h1M908 511.5h1M912 507.5h1M916 504.5h1M920 500.5h1M924 497.5h1M928 493.5h1M932 490.5h1M936 486.5h1M940 483.5h1M944 479.5h1M948 476.5h1M952 472.5h1M956 469.5h1M960 465.5h1M964 462.5h1M968 458.5h1M972 455.5h1M976 451.5h1M980 448.5h1M984 444.5h1M988 441.5h1M992 438.5h1M996 434.5h1M1000 431.5h1M1004 427.5h1M1008 424.5h1M1012 420.5h1M1016 417.5h1M1020 413.5h1M1024 410.5h1M1026 408.5h1M1030 408.5h1M1034 409.5h1M1038 410.5h1M1042 411.5h1M1046 412.5h1M1050 412.5h1M1054 413.5h1M1058 414.5h1M1062 415.5h1M1066 416.5h1M1070 416.5h1M1074 417.5h1M1078 418.5h1M1082 419.5h1M1086 420.5h1M1090 420.5h1M1094 421.5h1M1098 422.5h1M1102 423.5h1M1106 424.5h1M1110 424.5h1M1114 425.5h1M1118 426.5h1M1122 427.5h1M1126 428.5h1M1130 428.5h1M1134 429.5h1M1138 430.5h1M1142 431.5h1M1146 432.5h1M1150 432.5h1M1154 433.5h1M1158 434.5h1M1162 435.5h1M1166 436.5h1M1170 436.5h1M1174 437.5h1M1178 438.5h1M1182 439.5h1M1186 440.5h1M1190 440.5h1M1194 441.5h1M1198 442.5h1M1202 443.5h1M1206 444.5h1M1210 444.5h1M1214 445.5h1M1218 446.5h1M1222 447.5h1M1226 448.5h1M1230 448.5h1M1234 449.5h1M1238 450.5h1M1242 451.5h1M1246 452.5h1M1250 452.5h1M1254 453.5h1M1258 454.5h1M1262 455.5h1M1266 456.5h1M1270 456.5h1M1274 457.5h1M1278 458.5h1M1282 459.5h1M1286 460.5h1M1290 460.5h1M1294 461.5h1M1298 462.5h1M1302 463.5h1M1306 464.5h1M1310 464.5h1M1314 465.5h1M1318 466.5h1M1322 467.5h1M1326 468.5h1M1330 468.5h1M1334 469.5h1M1338 470.5h1M1342 471.5h1M1346 472.5h1M1350 472.5h1M1354 473.5h1M1358 474.5h1M1362 475.5h1M1366 476.5h1M1370 476.5h1M1374 477.5h1M1378 478.5h1M1382 479.5h1M1386 480.5h1M1390 480.5h1M1394 481.5h1M1398 482.5h1M1402 483.5h1M1406 484.5h1M1410 484.5h1M1414 485.5h1M1418 486.5h1M1422 487.5h1M1426 488.5h1M1430 488.5h1M1434 489.5h1M1438 490.5h1M1442 491.5h1M1446 492.5h1M1450 492.5h1M1454 493.5h1M1458 494.5h1M1462 495.5h1M1466 496.5h1M1470 496.5h1M1474 497.5h1M1478 498.5h1M1482 499.5h1M1486 500.5h1M1490 500.5h1M1494 501.5h1M1498 502.5h1M1502 503.5h1M1506 504.5h1M1510 504.5h1M1514 505.5h1M1518 506.5h1M1522 507.5h1M1526 508.5h1M1530 508.5h1M1533 509.5h1M1531 513.5h1M1529 517.5h1M1528 521.5h1M1526 525.5h1M1524 529.5h1M1522 533.5h1M1521 537.5h1M1519 541.5h1M1517 545.5h1M1515 549.5h1M1513 553.5h1M1512 557.5h1M1510 561.5h1M1508 565.5h1M1506 569.5h1M1505 573.5h1M1503 577.5h1M1501 581.5h1M1499 585.5h1M1497 589.5h1M1496 593.5h1M1494 597.5h1M1492 601.5h1M1490 605.5h1M1488 609.5h1M1487 613.5h1M1485 617.5h1M1483 621.5h1M1481 625.5h1M1480 629.5h1M1478 633.5h1M1476 637.5h1M1474 641.5h1M1472 645.5h1M1471 649.5h1M1469 653.5h1M1467 657.5h1M1465 661.5h1M1464 665.5h1M1462 669.5h1M1460 673.5h1M1458 677.5h1M1456 681.5h1M1455 685.5h1M1453 689.5h1M1451 693.5h1M1449 697.5h1M1448 701.5h1M1446 705.5h1M1444 709.5h1M1442 713.5h1M1440 717.5h1M1439 721.5h1M1437 725.5h1M1435 729.5h1M1433 733.5h1M1432 737.5h1M1430 741.5h1M1428 745.5h1M1426 749.5h1M1424 753.5h1M1423 757.5h1M1421 761.5h1M1419 765.5h1M800 605.5h1M804 606.5h1M808 607.5h1M812 608.5h1M816 609.5h1M820 610.5h1M824 611.5h1M828 612.5h1M832 613.5h1M836 614.5h1M840 615.5h1M844 616.5h1M848 617.5h1M852 618.5h1M856 619.5h1M860 620.5h1M864 621.5h1M868 623.5h1M872 624.5h1M876 625.5h1M880 626.5h1M884 627.5h1M888 628.5h1M892 629.5h1M896 630.5h1M900 631.5h1M904 632.5h1M908 633.5h1M912 634.5h1M916 635.5h1M920 636.5h1M924 637.5h1M928 638.5h1M932 640.5h1M936 641.5h1M940 642.5h1M944 643.5h1M948 644.5h1M952 645.5h1M956 646.5h1M960 647.5h1M964 648.5h1M968 649.5h1M972 650.5h1M976 651.5h1M980 652.5h1M984 653.5h1M988 654.5h1M992 655.5h1M996 657.5h1M1000 658.5h1M1004 659.5h1M1008 660.5h1M1012 661.5h1M1016 662.5h1M1020 663.5h1M1024 664.5h1M1028 665.5h1M1032 666.5h1M1036 667.5h1M1040 668.5h1M1044 669.5h1M1048 670.5h1M1052 671.5h1M1056 672.5h1M1060 673.5h1M1064 675.5h1M1068 676.5h1M1072 677.5h1M1076 678.5h1M1080 679.5h1M1084 680.5h1M1088 681.5h1M1092 682.5h1M1096 683.5h1M1100 684.5h1M1104 685.5h1M1108 686.5h1M1112 687.5h1M1116 688.5h1M1120 689.5h1M1124 690.5h1M1128 692.5h1M1132 693.5h1M1136 694.5h1M1140 695.5h1M1144 696.5h1M1148 697.5h1M1152 698.5h1M1156 699.5h1M1160 700.5h1M1164 701.5h1M1168 702.5h1M1172 703.5h1M1176 704.5h1M1180 705.5h1M1184 706.5h1M1188 707.5h1M1192 709.5h1M1196 710.5h1M1200 711.5h1M1204 712.5h1M1208 713.5h1M1212 714.5h1M1216 715.5h1M1220 716.5h1M1224 717.5h1M1228 718.5h1M1232 719.5h1M1236 720.5h1M1240 721.5h1M1244 722.5h1M1248 723.5h1M1252 724.5h1M1256 726.5h1M1260 727.5h1M1264 728.5h1M1268 729.5h1M1272 730.5h1M1276 731.5h1M1280 732.5h1M1284 733.5h1M1288 734.5h1M1292 735.5h1M1296 736.5h1M1300 737.5h1M1304 738.5h1M1308 739.5h1M1312 740.5h1M1316 741.5h1M1320 742.5h1M1324 744.5h1M1328 745.5h1M1332 746.5h1M1336 747.5h1M1340 748.5h1M1344 749.5h1M1348 750.5h1M1352 751.5h1M1356 752.5h1M1360 753.5h1M1364 754.5h1M1368 755.5h1M1372 756.5h1M1376 757.5h1M1380 758.5h1M1384 759.5h1M1388 761.5h1M1392 762.5h1M1396 763.5h1M1400 764.5h1M1404 765.5h1M1408 766.5h1M1412 767.5h1M1416 768.5h1M777 389.5h1M777 393.5h1M777 397.5h1M778 401.5h1M778 405.5h1M779 409.5h1M779 413.5h1M779 417.5h1M780 421.5h1M780 425.5h1M781 429.5h1M781 433.5h1M782 437.5h1M782 441.5h1M782 445.5h1M783 449.5h1M783 453.5h1M784 457.5h1M784 461.5h1M785 465.5h1M785 469.5h1M785 473.5h1M786 477.5h1M786 481.5h1M787 485.5h1M787 489.5h1M788 493.5h1M788 497.5h1M788 501.5h1M789 505.5h1M789 509.5h1M790 513.5h1M790 517.5h1M791 521.5h1M791 525.5h1M791 529.5h1M792 533.5h1M792 537.5h1M793 541.5h1M793 545.5h1M794 549.5h1M794 553.5h1M794 557.5h1M795 561.5h1M795 565.5h1M796 569.5h1M796 573.5h1M797 577.5h1M797 581.5h1M797 585.5h1M798 589.5h1M798 593.5h1M799 597.5h1M799 601.5h1M800 605.5h1M1023 225.5h1M1023 229.5h1M1023 233.5h1M1023 237.5h1M1023 241.5h1M1023 245.5h1M1023 249.5h1M1023 253.5h1M1023 257.5h1M1023 261.5h1M1023 265.5h1M1023 269.5h1M1023 273.5h1M1023 277.5h1M1024 281.5h1M1024 285.5h1M1024 289.5h1M1024 293.5h1M1024 297.5h1M1024 301.5h1M1024 305.5h1M1024 309.5h1M1024 313.5h1M1024 317.5h1M1024 321.5h1M1024 325.5h1M1024 329.5h1M1025 333.5h1M1025 337.5h1M1025 341.5h1M1025 345.5h1M1025 349.5h1M1025 353.5h1M1025 357.5h1M1025 361.5h1M1025 365.5h1M1025 369.5h1M1025 373.5h1M1025 377.5h1M1025 381.5h1M1026 385.5h1M1026 389.5h1M1026 393.5h1M1026 397.5h1M1026 401.5h1M1026 405.5h1M1566 310.5h1M1565 314.5h1M1564 318.5h1M1564 322.5h1M1563 326.5h1M1562 330.5h1M1562 334.5h1M1561 338.5h1M1560 342.5h1M1560 346.5h1M1559 350.5h1M1558 354.5h1M1558 358.5h1M1557 362.5h1M1556 366.5h1M1556 370.5h1M1555 374.5h1M1554 378.5h1M1554 382.5h1M1553 386.5h1M1552 390.5h1M1552 394.5h1M1551 398.5h1M1551 402.5h1M1550 406.5h1M1549 410.5h1M1549 414.5h1M1548 418.5h1M1547 422.5h1M1547 426.5h1M1546 430.5h1M1545 434.5h1M1545 438.5h1M1544 442.5h1M1543 446.5h1M1543 450.5h1M1542 454.5h1M1541 458.5h1M1541 462.5h1M1540 466.5h1M1539 470.5h1M1539 474.5h1M1538 478.5h1M1537 482.5h1M1537 486.5h1M1536 490.5h1M1536 494.5h1M1535 498.5h1M1534 502.5h1M1534 506.5h1M1450 530.5h1M1449 534.5h1M1449 538.5h1M1448 542.5h1M1448 546.5h1M1447 550.5h1M1447 554.5h1M1446 558.5h1M1446 562.5h1M1445 566.5h1M1445 570.5h1M1444 574.5h1M1443 578.5h1M1443 582.5h1M1442 586.5h1M1442 590.5h1M1441 594.5h1M1441 598.5h1M1440 602.5h1M1440 606.5h1M1439 610.5h1M1439 614.5h1M1438 618.5h1M1437 622.5h1M1437 626.5h1M1436 630.5h1M1436 634.5h1M1435 638.5h1M1435 642.5h1M1434 646.5h1M1434 650.5h1M1433 654.5h1M1433 658.5h1M1432 662.5h1M1431 666.5h1M1431 670.5h1M1430 674.5h1M1430 678.5h1M1429 682.5h1M1429 686.5h1M1428 690.5h1M1428 694.5h1M1427 698.5h1M1427 702.5h1M1426 706.5h1M1425 710.5h1M1425 714.5h1M1424 718.5h1M1424 722.5h1M1423 726.5h1M1423 730.5h1M1422 734.5h1M1422 738.5h1M1421 742.5h1M1421 746.5h1M1420 750.5h1M1419 754.5h1M1419 758.5h1M1418 762.5h1M1418 766.5h1"/>
<g stroke="#00f4f4" fill="none" stroke-width="1"><circle cx="778" cy="388.800" r="4.800" fill="#00f4f4"/><path d="M770,390.500 h16.500 M778.300,381.800 v15 M772.800,383 l10.500,11.500 M783.500,382.500 l-10.500,12"/></g>
<g fill="#000"><rect x="774.500" y="387.500" width="1.500" height="1"/><rect x="779" y="388.500" width="1.500" height="1"/><rect x="777" y="384.500" width="1.500" height="1.500"/><rect x="777" y="392" width="1" height="1"/><rect x="774.500" y="390" width="1" height="1"/><rect x="780" y="386.500" width="1" height="1"/></g>
<g fill="none" shape-rendering="crispEdges" stroke="#00f4f4" stroke-width="1.10"><path vector-effect="non-scaling-stroke" d="M0.58,-0.78 C0.52,-0.92 0.42,-1 0.3,-1 C0.1,-1 0,-0.78 0,-0.5 C0,-0.22 0.1,0 0.3,0 C0.46,0 0.58,-0.1 0.58,-0.38 L0.34,-0.38" transform="matrix(17.000,3.700,-4.000,6.000,790.50,389.20)"/><path vector-effect="non-scaling-stroke" d="M0.58,-0.66 C0.58,-0.46 0.46,-0.36 0.3,-0.36 C0.14,-0.36 0.02,-0.48 0.02,-0.67 C0.02,-0.87 0.14,-1 0.3,-1 C0.47,-1 0.58,-0.87 0.58,-0.66 C0.58,-0.3 0.5,0 0.22,0 C0.12,0 0.06,-0.05 0.04,-0.12" transform="matrix(17.000,3.700,-4.000,6.000,800.96,391.48)"/><path vector-effect="non-scaling-stroke" d="M0.03,-0.76 C0.05,-0.92 0.15,-1 0.3,-1 C0.46,-1 0.57,-0.9 0.57,-0.76 C0.57,-0.62 0.48,-0.52 0.32,-0.36 L0,0 L0.6,0" transform="matrix(17.000,3.700,-4.000,6.000,811.41,393.75)"/></g>
<path d="M778.3,396 L783.5,447" stroke="#00e8e8" stroke-width="1.2"/><path d="M783.5,447 L792,516" stroke="#2424ff" stroke-width="1.2"/>
<path d="M781,432 l4,0 l-4.500,5.500 l4.500,0.500" stroke="#2424ff" stroke-width="0.9" fill="none"/><path d="M780,439 l5,3" stroke="#2424ff" stroke-width="0.9"/>
<path d="M792,516.500 L800,518" stroke="#00c000" stroke-width="1"/><path d="M792,516.500 L799,511" stroke="#e00000" stroke-width="1"/>
<path d="M838,478 l3,-1 M839,476 v4" stroke="#e03030" stroke-width="1"/>
<path shape-rendering="crispEdges" d="M1100.0,618.3 C1102.2,617.5 1108.6,614.2 1113.3,613.3 C1118.0,612.4 1123.6,612.1 1128.3,612.7 C1133.0,613.3 1138.8,614.9 1141.7,616.7 C1144.6,618.5 1145.3,621.4 1145.7,623.3 C1146.1,625.2 1145.5,627.4 1144.0,628.3 C1142.5,629.2 1138.5,629.3 1136.7,628.6 C1134.9,627.9 1134.7,625.4 1133.3,624.0 C1131.9,622.6 1131.1,620.9 1128.3,620.3 C1125.5,619.7 1120.6,619.2 1116.7,620.3 C1112.8,621.4 1107.8,625.0 1105.0,626.7 C1102.2,628.4 1100.8,629.9 1100.0,630.5 M1100.0,642.7 C1102.8,642.8 1111.4,643.9 1116.7,643.3 C1122.0,642.7 1128.8,640.5 1131.7,639.3 C1134.6,638.1 1134.8,636.8 1134.0,636.0 C1133.2,635.2 1129.6,634.2 1126.7,634.3 C1123.8,634.3 1121.2,635.8 1116.7,636.3 C1112.2,636.8 1102.8,637.3 1100.0,637.5" fill="none" stroke="#ffffff" stroke-width="1"/>
<defs><linearGradient id="cg" x1="0" y1="0" x2="1" y2="0"><stop offset="0" stop-color="#d4d4d4"/><stop offset="0.35" stop-color="#a0a0a0"/><stop offset="0.7" stop-color="#c4c4c4"/><stop offset="1" stop-color="#cfcfcf"/></linearGradient></defs>
<path d="M1355.500,553 L1381,628 L1425,560 Z" fill="url(#cg)"/>
<ellipse cx="1390.300" cy="556.500" rx="35" ry="17.500" transform="rotate(3 1390 556.500)" fill="#9c9c9c"/>
<path d="M1391,545 L1381,628" stroke="#c8e8e8" stroke-width="0.8" stroke-dasharray="2 2" opacity="0.7"/>
<path d="M1376.2,522.0 C1378.0,525.1 1384.6,535.6 1386.7,540.8 C1388.8,546.0 1388.4,551.2 1388.8,553.3" fill="none" stroke="#182c2c" stroke-width="2.6"/>
<path d="M1381,628 L1372.400,707" stroke="#eef6f6" stroke-width="1"/><circle cx="1381" cy="628.500" r="1.300" fill="#7070ff"/>
</svg>
<!--PREVIEW-END-->
<!--DIALOG-START-->
<svg class="abs" style="left:700px;top:410px" width="500" height="350" viewBox="700 410 500 350"><ellipse cx="948.950" cy="585.500" rx="234" ry="162.350" fill="none" stroke="#fe0000" stroke-width="8.300"/></svg>
<div class="abs" style="left:800px;top:479px;width:300px;height:225px;background:#d9d9d9;border-top:1px solid #f0f0f0;border-left:1px solid #e6e6e6;border-right:1px solid #c8c8c8"></div>
<div class="abs" style="left:800px;top:484px;width:262px;text-align:center;font-size:12.900px;font-weight:bold;color:#4a4a4a;line-height:18px;white-space:pre">Komunikat LinuxCNC</div>
<svg class="abs" style="left:1010px;top:480px" width="90" height="22" viewBox="1010 480 90 22">
<rect x="1019" y="490" width="6" height="2" fill="#3c3c3c"/>
<path d="M1051,488.500 h4 v4 z M1049.500,494 v-4 l4,4 z" fill="#3c3c3c"/>
<circle cx="1082.500" cy="491" r="7" fill="#8fb266"/>
<path d="M1079.700,488.200 l5.600,5.600 M1085.300,488.200 l-5.600,5.600" stroke="#fff" stroke-width="1.700" stroke-linecap="round"/>
</svg>
<div class="abs serif" style="left:800px;top:531px;width:294px;text-align:center;font-size:20.250px;font-weight:bold;line-height:23px;color:#000;white-space:pre">Pomiar dlugosci narzedzia
Podlacz kabel czujnika
Kontynuuj gdy gotowe</div>
<div class="abs" style="left:802px;top:629px;width:297px;height:42px;background:#828282;border:1px solid;border-color:#9a9a9a #6a6a6a #5c5c5c #8c8c8c"></div>
<div class="abs" style="left:802px;top:634px;width:295px;text-align:center;font-size:26px;line-height:32px;color:#000">Kontynuuj</div>
<!--DIALOG-END-->
<!--SLIDERS-START-->
<div class="t" style="left:2px;top:866px">Skala prędkości:</div>
<div class="t" style="left:146px;top:866px;width:120px;text-align:right">100<span style="margin-left:2.5px">%</span></div>
<div class="abs" style="left:268px;top:867px;width:100px;height:17px;background:#b3b3b3;border:1px solid;border-color:#828282 #fff #fff #828282"></div>
<div class="raised" style="left:326px;top:868px;width:30px;height:15px"></div>
<div class="abs" style="left:340px;top:870px;width:2px;height:11px;border-left:1px solid #828282;border-right:1px solid #fff"></div>
<div class="t" style="left:2px;top:887px">Rapid Override:</div>
<div class="t" style="left:146px;top:887px;width:120px;text-align:right">100<span style="margin-left:2.5px">%</span></div>
<div class="abs" style="left:268px;top:888px;width:100px;height:17px;background:#b3b3b3;border:1px solid;border-color:#828282 #fff #fff #828282"></div>
<div class="raised" style="left:337px;top:889px;width:30px;height:15px"></div>
<div class="abs" style="left:351px;top:891px;width:2px;height:11px;border-left:1px solid #828282;border-right:1px solid #fff"></div>
<div class="t" style="left:2px;top:908px">Skala prędkości wrzeciona:</div>
<div class="t" style="left:146px;top:908px;width:120px;text-align:right">100<span style="margin-left:2.5px">%</span></div>
<div class="abs" style="left:268px;top:909px;width:100px;height:17px;background:#b3b3b3;border:1px solid;border-color:#828282 #fff #fff #828282"></div>
<div class="raised" style="left:326px;top:910px;width:30px;height:15px"></div>
<div class="abs" style="left:340px;top:912px;width:2px;height:11px;border-left:1px solid #828282;border-right:1px solid #fff"></div>
<div class="t" style="left:2px;top:929px">Prędkość posuwu:</div>
<div class="t" style="left:110px;top:929px;width:120px;text-align:right">192 mm/min</div>
<div class="abs" style="left:268px;top:930px;width:100px;height:17px;background:#b3b3b3;border:1px solid;border-color:#828282 #fff #fff #828282"></div>
<div class="raised" style="left:289px;top:931px;width:30px;height:15px"></div>
<div class="abs" style="left:303px;top:933px;width:2px;height:11px;border-left:1px solid #828282;border-right:1px solid #fff"></div>
<div class="t" style="left:2px;top:950px">Maksymalna prędkość:</div>
<div class="t" style="left:144px;top:950px;width:120px;text-align:right">1980 mm/min</div>
<div class="abs" style="left:268px;top:951px;width:100px;height:17px;background:#b3b3b3;border:1px solid;border-color:#828282 #fff #fff #828282"></div>
<div class="raised" style="left:337px;top:952px;width:30px;height:15px"></div>
<div class="abs" style="left:351px;top:954px;width:2px;height:11px;border-left:1px solid #828282;border-right:1px solid #fff"></div>
<div class="abs" style="left:8px;top:971px;width:5px;height:5px;border:1px solid;border-color:#fff #828282 #828282 #fff"></div>
<!--SLIDERS-END-->
<!--GCODE-START-->
<div id="gcode" class="abs">
<div class="gl" style="left:1.6px;top:2px"><i>     5:</i> ( Also press the Toggle Skip Lines with "/" to see that part )</div>
<div class="gl" style="left:1.6px;top:19px"><i>     6:</i> ( If the program is too big or small for your machine, change the scale below )</div>
<div class="gl" style="left:1.6px;top:36px"><i>     7:</i> ( LinuxCNC 19/1/2012 2:13:51 PM )</div>
<div class="gl" style="left:1.6px;top:53px"><i>     8:</i> #&lt;depth&gt;=2.0</div>
<div class="gl" style="left:1.6px;top:70px"><i>     9:</i> #&lt;scale&gt;=1.0</div>
<div class="gl" style="left:1.6px;top:87px"><i>    10:</i> G21 G90 G64 G40</div>
<div class="abs" style="left:1px;top:103px;width:120px;height:17px;background:#843c44"></div>
<div class="gl" style="left:1.6px;top:104px;color:#fff">    11: G0 Z3.0</div>
<div class="gl" style="left:1.6px;top:121px"><i>    12:</i> ( engraving )</div>
<div class="gl" style="left:1.6px;top:138px"><i>    13:</i> G17</div>
<div class="abs" style="left:1760px;top:0;width:12px;height:156px;background:#cecece"></div>
<svg class="abs" style="left:1760px;top:0" width="12" height="156" viewBox="0 0 12 156"><path d="M6,1 L0.500,11.500 H11.500 Z" fill="#d9d9d9"/><path d="M5.800,1 L0.500,11.500" stroke="#fff" fill="none"/><path d="M0.500,11.700 H11.500 L6.300,1" fill="none" stroke="#828282" stroke-width="1.300"/><rect x="0" y="14" width="12" height="6.500" fill="#d9d9d9"/><path d="M0,14.500 H11" stroke="#fff" stroke-width="1.500"/><path d="M0.500,20 H11.500 V15" fill="none" stroke="#828282" stroke-width="1.300"/><path d="M6,155 L0.500,144.500 H11.500 Z" fill="#d9d9d9"/><path d="M0.500,144.500 H11.500 M0.500,144.500 L5.800,155" stroke="#fff" fill="none"/><path d="M11.500,144.500 L6.300,155" fill="none" stroke="#828282" stroke-width="1.300"/></svg>
</div>
<!--GCODE-END-->
<!--STATUS-START-->
<div class="abs" style="left:0;top:1136px;width:118px;height:23px;border:2px solid;border-color:#828282 #fff #fff #828282"></div>
<div class="abs" style="left:118px;top:1136px;width:1453px;height:23px;border:2px solid;border-color:#828282 #fff #fff #828282"></div>
<div class="abs" style="left:1571px;top:1136px;width:207px;height:23px;border:2px solid;border-color:#828282 #fff #fff #828282"></div>
<div class="t" style="left:3px;top:1138px;letter-spacing:-0.9px">WŁĄCZONY</div>
<div class="t" style="left:121px;top:1138px">Brak narzędzia</div>
<div class="t" style="left:1575px;top:1138px">Pozycja: Względna Aktualna</div>
<!--STATUS-END-->
<!--TASKBAR-START-->
<div id="taskbar" class="abs">
<div class="abs" style="left:644px;top:1px;width:40px;height:40px;background:#656565"></div>
<div class="ind" style="left:92px"></div><div class="ind" style="left:138px"></div><div class="ind" style="left:184px"></div><div class="ind" style="left:230px"></div><div class="ind" style="left:276px"></div><div class="ind" style="left:322px"></div><div class="ind" style="left:368px"></div><div class="ind" style="left:414px"></div><div class="ind" style="left:460px"></div><div class="ind" style="left:506px"></div><div class="ind" style="left:552px"></div><div class="ind" style="left:598px"></div><div class="ind" style="left:644px"></div>
<svg class="abs" style="left:0;top:0" width="700" height="41" viewBox="0 1159 700 41">
<defs>
<linearGradient id="tf" x1="0" y1="0" x2="0" y2="1"><stop offset="0" stop-color="#f9a04c"/><stop offset="1" stop-color="#e8722a"/></linearGradient>
<linearGradient id="tq" x1="0" y1="0" x2="0" y2="1"><stop offset="0" stop-color="#5cb341"/><stop offset="1" stop-color="#3b8f27"/></linearGradient>
<linearGradient id="tbl" x1="0" y1="0" x2="0" y2="1"><stop offset="0" stop-color="#3a9ad9"/><stop offset="1" stop-color="#1f6fb2"/></linearGradient>
<linearGradient id="tdr" x1="0" y1="0" x2="0" y2="1"><stop offset="0" stop-color="#5c9fcb"/><stop offset="1" stop-color="#3f7fac"/></linearGradient>
<linearGradient id="trd" x1="0" y1="0" x2="0" y2="1"><stop offset="0" stop-color="#ea7a7e"/><stop offset="1" stop-color="#d4585e"/></linearGradient>
<linearGradient id="tcm" x1="0" y1="0" x2="0" y2="1"><stop offset="0" stop-color="#3f68b8"/><stop offset="1" stop-color="#2b4f98"/></linearGradient>
</defs>
<!-- mint logo -->
<path d="M4.500,1166 h20 q11.500,0 11.500,11.500 v15.500 h-19 q-9,0 -9,-9 v-12.500 h-3.500 z" fill="#fff"/>
<path d="M7,1168 h17 q9.800,0 9.800,9.800 v13.200 h-16.500 q-7,0 -7,-7 v-13 h-3.300 z" fill="#8acb3e"/>
<path d="M13.500,1172 v11 q0,4 4,4 h8 q4,0 4,-4 v-5.500 q0,-3 -3,-3 q-2.500,0 -2.500,3 v5 M24,1178 q0,-3.500 -2.800,-3.500 q-2.700,0 -2.700,3.500 v5" fill="none" stroke="#fff" stroke-width="2.100" stroke-linecap="round" stroke-linejoin="round"/>
<!-- show desktop -->
<rect x="49" y="1168" width="30" height="24" fill="#87aa5f"/><rect x="49" y="1168" width="30" height="4" fill="#7a9c54"/><rect x="53" y="1169.500" width="1.500" height="1.500" fill="#fff"/>
<!-- firefox -->
<rect x="98" y="1165" width="28" height="28" rx="5" fill="url(#tf)"/>
<circle cx="112" cy="1179.500" r="9.800" fill="#fff"/><circle cx="113.500" cy="1177.500" r="6" fill="#f1893a"/><path d="M105.500,1176 q2,-3.500 5.500,-3.500 l-1,2.500 q3.500,0.500 3.500,3 q-2.500,0 -3.500,1.500 q1.500,2.500 4.500,2 q3.500,-1 4.500,-5 q1.500,5 -2,8.500 q-4,3.500 -9,1 q-4.500,-3 -3,-10 z" fill="#fff"/>
<!-- terminal -->
<rect x="143.500" y="1165" width="29" height="28" rx="6" fill="#1d1d1d" stroke="#111" stroke-width="1"/>
<text x="146.800" y="1175.200" font-family="Liberation Sans" font-size="8.500" fill="#d8d8d8">$</text><rect x="152.800" y="1175.200" width="6" height="1.200" fill="#f0f0f0"/>
<!-- files -->
<path d="M198,1168 h16.500 v3 h-16.500 z" fill="#f2f2f2"/><path d="M189,1171 h30 v20 h-30 z" fill="#87aa5f"/><path d="M189,1171 l0,-2.500 q0,-1 1,-1 h7.500 l1.500,3.500 z" fill="#87aa5f"/>
<circle cx="191" cy="1166.500" r="5.500" fill="#3d3d3d"/><text x="188.300" y="1170.200" font-family="Liberation Sans" font-size="10" font-weight="bold" fill="#e8eef6">3</text>
<!-- eclipse -->
<circle cx="248.500" cy="1178.500" r="14.300" fill="#f7941e"/><circle cx="251.500" cy="1178.500" r="14" fill="#2c2255"/>
<rect x="237.500" y="1174" width="28" height="1.800" fill="#fff"/><rect x="237.500" y="1177.600" width="28" height="1.800" fill="#fff"/><rect x="237.500" y="1181.200" width="28" height="1.800" fill="#fff"/>
<path d="M251.500,1164.500 a14,14 0 0 0 0,28 a14,14 0 0 0 0,-28" fill="none" stroke="#2c2255" stroke-width="0"/>
<!-- qt -->
<rect x="282" y="1165" width="28" height="28" rx="5" fill="url(#tq)"/>
<text x="286.500" y="1186" font-family="Liberation Serif" font-size="24" font-weight="bold" fill="#fff" textLength="19.5" lengthAdjust="spacingAndGlyphs">Qt</text>
<!-- writer -->
<rect x="328" y="1165" width="28" height="28" rx="5" fill="url(#tbl)"/>
<path d="M334,1172 h11 M334,1176 h17 M334,1180 h17 M334,1184 h17" stroke="#fff" stroke-width="1.800"/>
<circle cx="330.500" cy="1166.500" r="5.500" fill="#3d3d3d"/><text x="327.800" y="1170.200" font-family="Liberation Sans" font-size="10" font-weight="bold" fill="#e8eef6">2</text>
<!-- draw x2 -->
<g><rect x="374" y="1165" width="28" height="28" rx="5" fill="url(#tdr)"/>
<path d="M391,1173 h-11 v11 h4" fill="none" stroke="#fff" stroke-width="1.700"/><rect x="379.200" y="1182.500" width="5" height="3" fill="#fff"/>
<path d="M398,1170.500 l1.500,1.500 l-7,10 l-2.500,-1.800 z" fill="#e9eef4"/><path d="M389.500,1181 l2.300,1.700 q-1.500,3 -5.500,3 q2.500,-1.500 3.200,-4.700 z" fill="#e9eef4"/></g>
<g transform="translate(46,0)"><rect x="374" y="1165" width="28" height="28" rx="5" fill="url(#tdr)"/>
<path d="M391,1173 h-11 v11 h4" fill="none" stroke="#fff" stroke-width="1.700"/><rect x="379.200" y="1182.500" width="5" height="3" fill="#fff"/>
<path d="M398,1170.500 l1.500,1.500 l-7,10 l-2.500,-1.800 z" fill="#e9eef4"/><path d="M389.500,1181 l2.300,1.700 q-1.500,3 -5.500,3 q2.500,-1.500 3.200,-4.700 z" fill="#e9eef4"/></g>
<!-- glasses -->
<rect x="466" y="1165" width="28" height="28" rx="5" fill="url(#trd)"/>
<g fill="none" stroke="#fff" stroke-width="1.800"><rect x="470" y="1178.500" width="8.500" height="6.500" rx="2.500"/><rect x="481.500" y="1178.500" width="8.500" height="6.500" rx="2.500"/><path d="M478.500,1180.500 h3 M470.500,1179.500 l3.500,-6 l2,1.200 M489.500,1179.500 l-3.500,-6 l-2,1.200"/></g>
<!-- axis X -->
<g stroke="#000" stroke-width="1.100" fill="none"><path d="M559,1164 v24.500 M557,1164 h4 M557,1188.500 h4 M563,1191 h24 M563,1189 v4 M587,1189 v4"/></g>
<text x="563" y="1187.800" font-family="Liberation Serif" font-size="35.500" font-weight="bold" fill="#000" textLength="23.500" lengthAdjust="spacingAndGlyphs">X</text>
<!-- camera -->
<rect x="604" y="1165" width="28" height="28" rx="5" fill="url(#tcm)"/>
<path d="M608,1173.500 h20 v13 h-20 z M618,1171 h7 v2.500 h-7 z" fill="#fff"/><circle cx="621" cy="1180" r="4" fill="#fff" stroke="#3560ad" stroke-width="1.400"/><rect x="610" y="1175" width="3" height="1.200" fill="#3560ad"/>
<circle cx="606.500" cy="1166.500" r="5.500" fill="#3d3d3d"/><text x="603.800" y="1170.200" font-family="Liberation Sans" font-size="10" font-weight="bold" fill="#f0d8b0">2</text>
<!-- settings -->
<rect x="651" y="1166" width="26.500" height="26.500" rx="3" fill="#fbfbfb"/>
<g transform="translate(664.200,1179.200)" fill="#3b4558"><circle r="6.300"/><g id="teeth"><rect x="-1.700" y="-8.300" width="3.400" height="16.600" rx="0.800"/><rect x="-1.700" y="-8.300" width="3.400" height="16.600" rx="0.800" transform="rotate(45)"/><rect x="-1.700" y="-8.300" width="3.400" height="16.600" rx="0.800" transform="rotate(90)"/><rect x="-1.700" y="-8.300" width="3.400" height="16.600" rx="0.800" transform="rotate(135)"/></g><circle r="2.900" fill="#fbfbfb"/></g>
</svg>
<!-- tray -->
<svg class="abs" style="left:1660px;top:0" width="260" height="41" viewBox="1660 1159 260 41">
<path d="M1679,1167.500 l11.500,21.500 q0.500,1.500 -1,1.500 h-21 q-1.500,0 -1,-1.500 z" fill="#fff"/><rect x="1677.800" y="1174.500" width="2.400" height="8.500" rx="1" fill="#2d2d2d"/><circle cx="1679" cy="1186.300" r="1.500" fill="#2d2d2d"/>
<path d="M1706.700,1169.500 q5,2.500 9.500,2.500 q0,13 -9.500,17.500 q-9.500,-4.500 -9.500,-17.500 q4.500,0 9.500,-2.500 z" fill="#e6e6e6"/><circle cx="1706.700" cy="1178.500" r="5.200" fill="#3d7fc8"/><rect x="1706" y="1177.500" width="1.500" height="4" fill="#fff"/><circle cx="1706.700" cy="1175.800" r="0.900" fill="#fff"/>
<ellipse cx="1735" cy="1180" rx="7.700" ry="10.500" fill="#3d74c4"/><path d="M1730.500,1175 l8,8 l-4,4 v-15 l4,4 l-8,8" fill="none" stroke="#fff" stroke-width="1.400" stroke-linejoin="round"/>
<path d="M1756,1172 h8 v3.500 h-8 z M1753,1176 h14 v7 h-2.500 v-3 h-9 v3 h-2.500 z" fill="#fff"/><rect x="1756.500" y="1181" width="7" height="5.500" fill="none" stroke="#fff" stroke-width="1.200"/><path d="M1757.500,1183.700 h5" stroke="#fff" stroke-width="0.800"/>
<rect x="1779.800" y="1172.800" width="12.500" height="14.500" rx="1.500" fill="none" stroke="#fff" stroke-width="1.800"/><circle cx="1785.800" cy="1179.300" r="3.600" fill="#e8e8e8"/><circle cx="1786.300" cy="1179.300" r="1.100" fill="#2d2d2d"/><path d="M1786,1180.300 l3.500,4.500" stroke="#e8e8e8" stroke-width="1.600"/>
<g fill="none" stroke-linecap="round"><path d="M1804.500,1176.500 q7.200,-6.500 14.400,0" stroke="#9a9a9a" stroke-width="1.800"/><path d="M1807,1180 q4.700,-4.300 9.400,0" stroke="#fff" stroke-width="1.800"/><path d="M1809.500,1183.300 q2.200,-2 4.400,0" stroke="#fff" stroke-width="1.800"/></g><circle cx="1811.700" cy="1186.500" r="1.400" fill="#fff"/>
<path d="M1830,1176 h3.500 l5,-4.500 v16 l-5,-4.500 h-3.500 z" fill="#fff"/><path d="M1840.500,1175.500 q2.500,4 0,8 M1843.500,1173 q4,6.500 0,13" fill="none" stroke="#8a8a8a" stroke-width="1.300"/><path d="M1841.500,1184 l4,4 M1845.500,1184 l-4,4" stroke="#fff" stroke-width="1.400"/>
<rect x="1859" y="1174.800" width="10" height="12.500" rx="1.500" fill="none" stroke="#fff" stroke-width="1.800"/><rect x="1861.500" y="1172.300" width="5" height="2.500" fill="#fff"/><path d="M1861,1178.300 h5.500 M1861,1181.300 h4 M1861,1184.300 h3" stroke="#fff" stroke-width="1.400"/><path d="M1871.500,1178.500 l-4,5 h3 l-1.500,5 l5,-6.500 h-3.200 z" fill="#8a8a8a"/>
<text x="1881.800" y="1186" font-family="Liberation Sans" font-size="12.500" font-weight="bold" fill="#dfe7f1" textLength="33.200" lengthAdjust="spacingAndGlyphs">14:49</text>
</svg>
</div>
<!--TASKBAR-END-->
</body>
</html>
